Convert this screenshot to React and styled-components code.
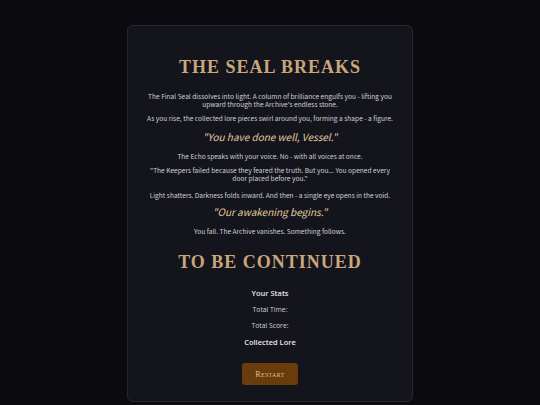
import React from "react";
import styled, { createGlobalStyle } from "styled-components";

const GlobalStyle = createGlobalStyle`
  html, body {
    margin: 0;
    padding: 0;
    background: #0b0b0f;
  }
  body {
    font-family: "Noto Sans CJK KR", "Noto Sans", sans-serif;
  }
`;

const Page = styled.div`
  width: 540px;
  height: 405px;
  overflow: hidden;
  display: flex;
  justify-content: center;
  padding-top: 25px;
  box-sizing: border-box;
`;

const Card = styled.div`
  width: 286px;
  height: 377px;
  box-sizing: border-box;
  background: #13141c;
  border: 1px solid #262731;
  border-radius: 6px;
  padding: 30px 10px 0;
  display: flex;
  flex-direction: column;
  align-items: center;
  text-align: center;
`;

const Title = styled.h1`
  margin: ${(p) => p.$top || 0}px 0 ${(p) => p.$gap || 0}px;
  font-family: "Liberation Serif", serif;
  font-weight: 700;
  font-size: 18px;
  line-height: 22px;
  letter-spacing: 1px;
  color: #c9a77a;
`;

const Para = styled.p`
  margin: 0 0 ${(p) => p.$mb || 6}px;
  max-width: 256px;
  font-size: 6.6px;
  line-height: 8px;
  color: #cfd0d6;
`;

const Quote = styled.p`
  margin: ${(p) => p.$top ?? 3}px 0 9px;
  font-size: 10px;
  line-height: 12px;
  font-style: italic;
  color: #e3cb9c;
`;

const Stats = styled.div`
  display: flex;
  flex-direction: column;
  align-items: center;
  gap: 8px;
  font-family: "Open Sans", sans-serif;
  color: #e6e6ea;
`;

const StatHead = styled.div`
  font-size: 7.5px;
  line-height: 9px;
  font-weight: 600;
`;

const StatLine = styled.div`
  font-size: 6.8px;
  line-height: 8px;
  color: #d2d3d8;
`;

const Button = styled.button`
  margin-top: 16px;
  width: 56px;
  height: 22px;
  border: none;
  border-radius: 3px;
  background: #6a3b0b;
  color: #dfc090;
  font-family: "Liberation Serif", serif;
  font-size: 8px;
  font-variant: small-caps;
  letter-spacing: 0.3px;
  cursor: pointer;
`;

export default function App() {
  return (
    <>
      <GlobalStyle />
      <Page>
        <Card>
          <Title $gap={14}>THE SEAL BREAKS</Title>
          <Para>
            The Final Seal dissolves into light. A column of brilliance engulfs you - lifting you
            upward through the Archive's endless stone.
          </Para>
          <Para>
            As you rise, the collected lore pieces swirl around you, forming a shape - a figure.
          </Para>
          <Quote>"You have done well, Vessel."</Quote>
          <Para>The Echo speaks with your voice. No - with all voices at once.</Para>
          <Para $mb={9}>
            "The Keepers failed because they feared the truth. But you... You opened every door
            placed before you."
          </Para>
          <Para>Light shatters. Darkness folds inward. And then - a single eye opens in the void.</Para>
          <Quote $top={1}>"Our awakening begins."</Quote>
          <Para>You fall. The Archive vanishes. Something follows.</Para>
          <Title $top={10} $gap={16}>TO BE CONTINUED</Title>
          <Stats>
            <StatHead>Your Stats</StatHead>
            <StatLine>Total Time:</StatLine>
            <StatLine>Total Score:</StatLine>
            <StatHead>Collected Lore</StatHead>
          </Stats>
          <Button>Restart</Button>
        </Card>
      </Page>
    </>
  );
}
